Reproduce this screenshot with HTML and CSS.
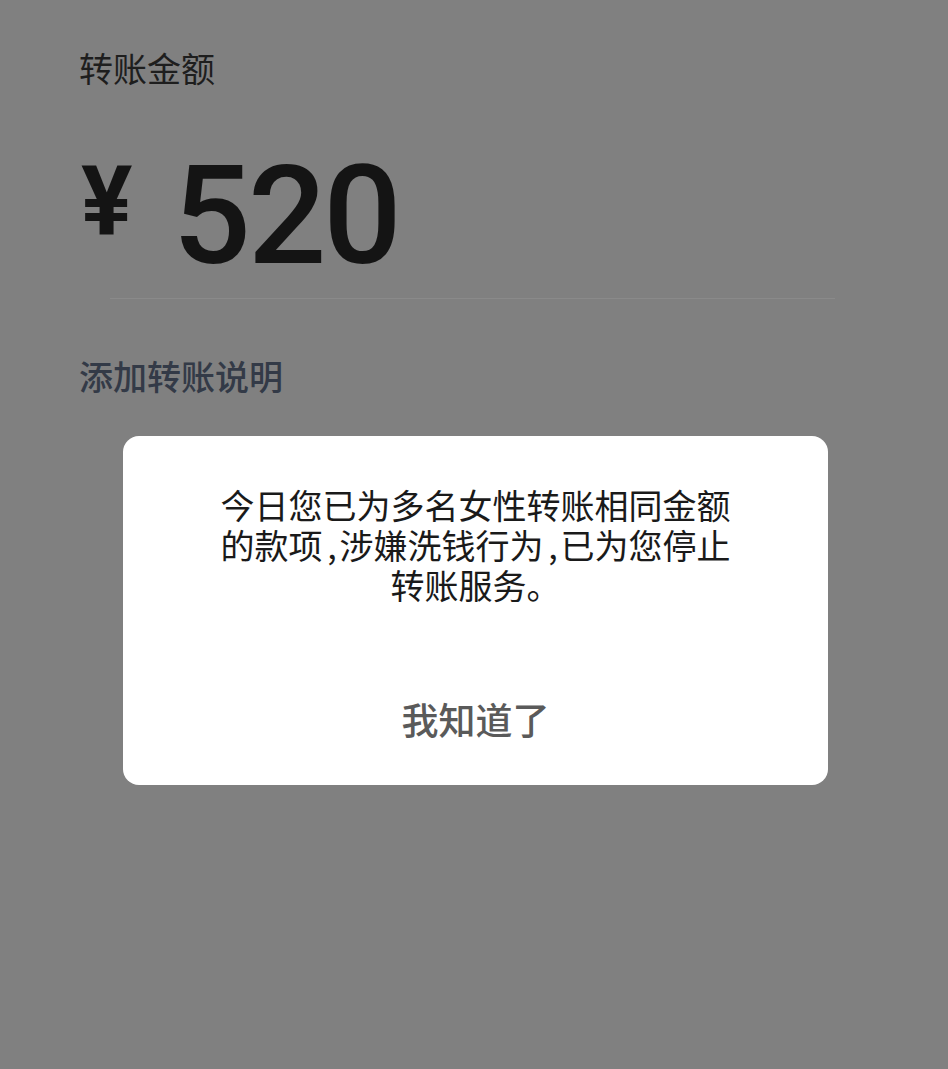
FILE: index.html
```html
<!DOCTYPE html>
<html lang="zh-CN">
<head>
<meta charset="utf-8">
<title>转账</title>
<link rel="stylesheet" href="styles.css">
</head>
<body>
<div class="page">
  <div class="label">转账金额</div>
  <div class="amount">
    <span class="currency">¥</span>
    <span class="value">520</span>
  </div>
  <div class="divider"></div>
  <div class="note">添加转账说明</div>
  <div class="dialog">
    <p class="message">今日您已为多名女性转账相同金额<br>的款项<span class="half">,</span>涉嫌洗钱行为<span class="half">,</span>已为您停止<br>转账服务。</p>
    <div class="action">我知道了</div>
  </div>
</div>
</body>
</html>
```
FILE: styles.css
```css
html, body {
  margin: 0;
  padding: 0;
  background: #808080;
}
body {
  width: 948px;
  height: 1069px;
  overflow: hidden;
  font-family: "Noto Sans CJK SC", "Noto Sans", sans-serif;
}
.page {
  padding: 44px 0 0 79px;
}
.label {
  font-size: 34px;
  line-height: 48px;
  color: #1e1e1e;
}
.amount {
  display: flex;
  align-items: flex-start;
  margin-top: 52px;
  height: 140px;
  color: #141414;
  font-family: Roboto, "Noto Sans", sans-serif;
  font-weight: 500;
}
.currency {
  font-size: 96px;
  line-height: 96px;
  font-weight: 700;
  margin-left: 2px;
  margin-top: 9px;
}
.value {
  font-size: 138px;
  line-height: 120px;
  margin-left: 40px;
  margin-top: 12px;
  letter-spacing: -3px;
}
.divider {
  height: 1px;
  background: #8a8a8a;
  margin: 14px 113px 0 31px;
}
.note {
  margin-top: 52px;
  font-size: 34px;
  line-height: 50px;
  font-weight: 500;
  color: #333a47;
}
.dialog {
  width: 705px;
  height: 349px;
  box-sizing: border-box;
  margin: 35px 0 0 44px;
  background: #ffffff;
  border-radius: 16px;
  display: flex;
  flex-direction: column;
  align-items: center;
  padding-top: 49px;
}
.message {
  margin: 0;
  font-size: 34px;
  line-height: 40px;
  color: #1a1a1a;
  text-align: center;
}
.half {
  display: inline-block;
  width: 17px;
  padding-left: 2px;
  box-sizing: border-box;
}
.action {
  margin-top: 89px;
  font-size: 37px;
  line-height: 50px;
  font-weight: 500;
  color: #5a5a5a;
}
```
